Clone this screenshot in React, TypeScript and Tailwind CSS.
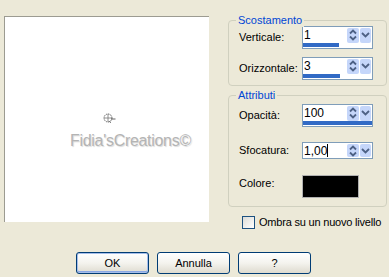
import React from "react";

function UpDown({ h }: { h: number }) {
  return (
    <div className="w-[12px] bg-[#C5D6FA] rounded-[2px] flex items-center justify-center" style={{ height: h }}>
      <svg width="12" height="14" viewBox="0 0 12 14">
        <path d="M3 5.5 L6 2.5 L9 5.5" fill="none" stroke="#4D6185" strokeWidth="1.8" />
        <path d="M3 8.5 L6 11.5 L9 8.5" fill="none" stroke="#4D6185" strokeWidth="1.8" />
      </svg>
    </div>
  );
}

function Drop({ h }: { h: number }) {
  return (
    <div className="w-[11px] bg-[#C5D6FA] rounded-[2px] flex items-center justify-center" style={{ height: h }}>
      <svg width="11" height="14" viewBox="0 0 11 14">
        <path d="M2 5 L5.5 8.5 L9 5" fill="none" stroke="#4D6185" strokeWidth="1.8" />
      </svg>
    </div>
  );
}

function SpinBox({ value, bar, caret }: { value: string; bar?: string; caret?: boolean }) {
  const hasBar = bar !== undefined;
  return (
    <div
      className={
        "border border-[#7F9DB9] bg-white w-[71px] flex flex-col " +
        (hasBar ? "h-[23px]" : "h-[17px]")
      }
    >
      <div className="flex-1 flex items-center">
        <div className="flex-1 flex items-center pl-[1px] text-[12px] text-black leading-none">
          <span>{value}</span>
          {caret && <span className="w-[1px] h-[13px] bg-black" />}
        </div>
        <div className="flex gap-[1px] mr-[1px]">
          <UpDown h={hasBar ? 15 : 13} />
          <Drop h={hasBar ? 15 : 13} />
        </div>
      </div>
      {hasBar && (
        <div className="h-[4px] mb-[1px] flex">
          <div className={"h-full bg-[#316AC5] " + bar} />
        </div>
      )}
    </div>
  );
}

function Row({ label, children, h }: { label: string; children: React.ReactNode; h: string }) {
  return (
    <div className={"flex items-center " + h}>
      <div className="w-[63px] text-[11px] text-black">{label}</div>
      {children}
    </div>
  );
}

function Group({ title, children, cls }: { title: string; children: React.ReactNode; cls: string }) {
  return (
    <div className={"relative border border-[#D0D0BF] rounded-[4px] w-[159px] " + cls}>
      <span className="absolute left-[7px] -top-[7px] bg-[#ECE9D8] px-[2px] text-[11px] leading-[13px] text-[#0046D5]">
        {title}
      </span>
      {children}
    </div>
  );
}

function XPButton({ label, def }: { label: string; def?: boolean }) {
  return (
    <div
      className={
        "w-[73px] h-[22px] rounded-[3px] border border-[#003C74] bg-gradient-to-b from-white via-[#F4F3EE] to-[#DEDBCF] flex items-center justify-center text-[11px] text-black " +
        (def ? "shadow-[inset_0_0_0_1px_#A6BEEA,inset_0_-1px_0_1px_#8AA8E4]" : "")
      }
    >
      {label}
    </div>
  );
}

export default function App() {
  return (
    <div className="w-[389px] h-[277px] bg-[#ECE9D8] overflow-hidden flex flex-col font-['Liberation_Sans',Arial,sans-serif]">
      <div className="flex h-[252px] items-start">
        <div className="ml-[4px] mt-[16px] w-[205px] h-[206px] bg-white border-l border-t border-[#9C9B91] flex flex-col pl-[65px] pt-[96px]">
          <div className="ml-[33px] h-[11px]">
            <svg width="13" height="11" viewBox="0 0 13 11">
              <circle cx="5" cy="5" r="4" fill="none" stroke="#555" strokeWidth="0.9" strokeDasharray="1.5 0.8" />
              <path d="M1 5 H9 M5 1 V9" stroke="#777" strokeWidth="0.8" />
              <path d="M8 6 H12.5" stroke="#555" strokeWidth="0.9" />
              <path d="M6 8 L8 10" stroke="#666" strokeWidth="0.8" />
            </svg>
          </div>
          <div className="mt-[8px] text-[16px] leading-[18px] text-[#B4B4B4] tracking-[-0.3px] [text-shadow:1px_1px_1px_#DADADA] whitespace-nowrap">
            Fidia'sCreations©
          </div>
        </div>

        <div className="ml-[19px] mt-[20px] flex flex-col">
          <Group title="Scostamento" cls="h-[66px] pt-[5px] pl-[10px]">
            <Row label="Verticale:" h="h-[23px]">
              <SpinBox value="1" bar="w-[36px]" />
            </Row>
            <div className="h-[8px]" />
            <Row label="Orizzontale:" h="h-[23px]">
              <SpinBox value="3" bar="w-[37px]" />
            </Row>
          </Group>

          <Group title="Attributi" cls="mt-[9px] h-[112px] pt-[8px] pl-[10px]">
            <Row label="Opacità:" h="h-[23px]">
              <SpinBox value="100" bar="w-full" />
            </Row>
            <div className="h-[15px]" />
            <Row label="Sfocatura:" h="h-[17px]">
              <SpinBox value="1,00" caret />
            </Row>
            <div className="h-[16px]" />
            <div className="flex items-start h-[23px]">
              <div className="w-[63px] text-[11px] text-black">Colore:</div>
              <div className="w-[57px] h-[23px] bg-black border border-[#B0B0B0]" />
            </div>
          </Group>

          <div className="mt-[9px] pl-[14px] flex items-center">
            <div className="w-[13px] h-[13px] border border-[#1C5180] bg-gradient-to-br from-[#DCDCD7] to-white" />
            <span className="ml-[4px] text-[11px] tracking-[-0.2px] text-black leading-none">Ombra su un nuovo livello</span>
          </div>
        </div>
      </div>

      <div className="flex gap-[8px] pl-[76px]">
        <XPButton label="OK" def />
        <XPButton label="Annulla" />
        <XPButton label="?" />
      </div>
    </div>
  );
}
